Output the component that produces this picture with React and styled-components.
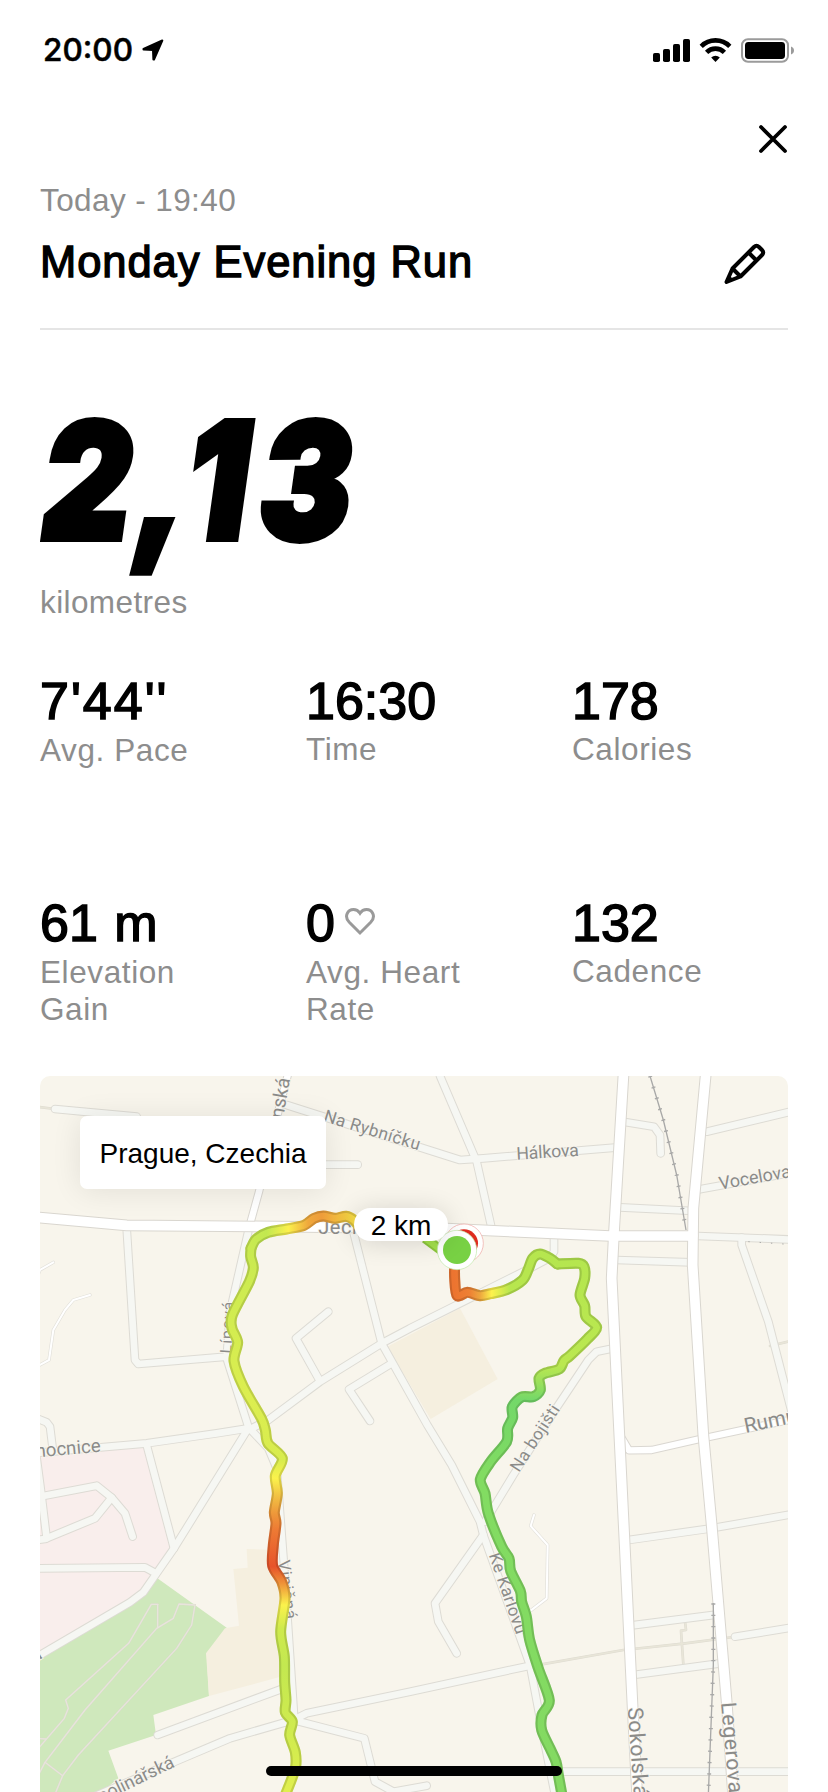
import styled, { createGlobalStyle } from "styled-components";

const stats = [
  { value: "7'44''", label: "Avg. Pace", low: true, spacing: 2 },
  { value: "16:30", label: "Time" },
  { value: "178", label: "Calories" },
  { value: "61 m", label: "Elevation Gain", low: true },
  { value: "0", label: "Avg. Heart Rate", heart: true, low: true },
  { value: "132", label: "Cadence" },
];

const minorRoads = [
  "M75 132 320 155",
  "M770 120 1290 285 1360 280 1755 248",
  "M1230 33 1340 290 1385 490",
  "M700 299H983",
  "M290 490 315 885 325 897 590 875",
  "M658 485 600 740 590 880 655 1085",
  "M970 500 1055 835 1192 1080 1265 1200 1350 1370 1360 1410 1500 1800 1545 2040 1575 2190",
  "M655 1095 715 1065 870 950 1055 835 1140 790 1320 700 1500 610 1562 577 1572 560V515",
  "M895 740 798 820 868 945",
  "M1085 895 957 973 1020 1068",
  "M20 1060 50 1072 60 1085 68 1150",
  "M20 1164 350 1135 560 1105 655 1090",
  "M350 1140 432 1450",
  "M655 1090 432 1450 340 1582 300 1612 20 1776",
  "M660 1092 715 1150 740 1210 762 1500 792 1950",
  "M20 1297 200 1262 245 1298 285 1345 308 1415",
  "M245 1298 195 1360 45 1422 20 1425",
  "M20 1180 32 1270 50 1420",
  "M20 1510 345 1507 378 1525",
  "M383 2010 760 1870",
  "M180 2200 430 2092 600 2020 790 1965 830 1945 1140 1880 1500 1802",
  "M790 1965 1003 2020 1035 2150 1090 2180 1190 2162",
  "M1560 2120H2290",
  "M1360 1410 1215 1615 1225 1670 1280 1765",
  "M1740 852 1700 860 1675 885 1575 1035 1450 1230 1365 1370",
  "M1780 170 1872 185 1890 210 1892 265",
  "M2030 200 2290 138",
  "M2010 373 2290 322",
  "M1770 427 1990 438",
  "M1760 585 1985 592",
  "M2005 513 2290 524",
  "M2135 518V540L2215 770 2290 1060",
  "M1790 1426 2045 1390 2290 1347",
  "M1800 1682 2065 1648",
  "M1810 1830 2070 1795",
  "M2115 1715 2290 1687",
];

const whiteRoads = [
  "M776 20 745 140 687 380 658 485",
  "M1770 1110 1797 1156 1865 1155 2010 1122 2290 1062",
];

const majorRoads = [
  "M20 457 290 481 970 487 1250 491 1740 513 1988 513",
  "M1781 20 1752 500 1745 640 1768 1110 1808 1930 1822 2200",
  "M2028 20 1990 430 1988 600 2020 1110 2045 1380 2090 1910 2110 2200",
];

const trails = [
  "M70 592 30 615 20 640",
  "M180 690 130 705 105 735 70 795 57 885 20 905",
  "M1512 1350 1502 1383 1553 1440 1550 1600 1498 1640",
];

const footpaths = [
  "M20 125 75 132",
  "M1535 1798 1780 1755 1960 1736 2110 1716",
  "M1965 1670 1968 1695 1953 1697 1960 1798",
  "M2220 843 2290 826",
];

const parkPaths = [
  "M383 1618H364L296 1735 107 1905 115 1930 103 1960 20 2056",
  "M383 1618V1688",
  "M495 1620 447 1617 430 1660 380 1690 165 1935 45 2092 20 2140",
  "M495 1620 485 1680 440 1750 145 2070 98 2132 74 2190",
  "M45 2092 98 2132",
  "M20 2020 47 2022",
];

const railways = ["M1860 33 1900 165 1940 330 1968 495", "M2050 1615V1800L2035 2190"];

const streetNames = [
  { text: "Štěpánská", x: 780, y: 42, angle: -80, size: 58, anchor: "end" },
  { text: "Na Rybníčku", x: 878, y: 168, angle: 17, size: 52, length: 300 },
  { text: "Ječná", x: 865, y: 507, angle: 0, size: 60, length: 168 },
  { text: "Lípová", x: 604, y: 866, angle: -87, size: 48, length: 155 },
  { text: "Hálkova", x: 1460, y: 284, angle: -3.5, size: 53, length: 188 },
  { text: "Vocelova", x: 2070, y: 374, angle: -10, size: 54, length: 218 },
  { text: "Rumunská", x: 2147, y: 1104, angle: -12, size: 62 },
  { text: "Na bojišti", x: 1467, y: 1224, angle: -57, size: 51, length: 228 },
  { text: "Ke Karlovu", x: 1376, y: 1470, angle: 71, size: 51, length: 254 },
  { text: "Viničná", x: 745, y: 1487, angle: 83, size: 50, length: 178 },
  { text: "U Nemocnice", x: 213, y: 1160, angle: -5, size: 56, anchor: "end" },
  { text: "Kateřinská", x: 40, y: 1778, angle: -32, size: 54, anchor: "end" },
  { text: "Apolinářská", x: 437, y: 2104, angle: -26, size: 54, length: 284, anchor: "end" },
  { text: "Sokolská", x: 1793, y: 1928, angle: 86, size: 64, length: 270 },
  { text: "Legerova", x: 2073, y: 1913, angle: 85, size: 64, length: 274 },
];

const paceStart = [
  [1274, 595], [1274, 640], [1281, 692], [1312, 682], [1350, 692], [1382, 686],
  [1430, 674], [1478, 645], [1495, 612], [1508, 580], [1530, 567], [1560, 580],
  [1582, 597],
];

const paceOut = [
  [1582, 597], [1645, 595], [1662, 605], [1664, 640], [1650, 690], [1664, 722],
  [1668, 755], [1700, 787], [1672, 822], [1620, 872], [1602, 887], [1588, 912],
  [1545, 925], [1527, 940], [1531, 975], [1510, 995], [1475, 996], [1447, 1025],
  [1448, 1058], [1433, 1090], [1430, 1130], [1382, 1190], [1351, 1243], [1365, 1285],
  [1375, 1345], [1415, 1445], [1437, 1480], [1442, 1518], [1471, 1578], [1475, 1610],
  [1489, 1655], [1499, 1725], [1525, 1810], [1558, 1906], [1536, 1950], [1535, 1995],
  [1560, 2050], [1578, 2090], [1585, 2130], [1596, 2190],
];

const paceTop = [
  [1000, 500], [972, 466], [948, 454], [915, 460], [880, 453], [852, 460],
  [822, 481], [770, 492], [715, 502], [678, 523], [663, 550],
];

const paceBack = [
  [663, 550], [662, 575], [670, 608], [658, 650], [607, 750], [606, 790],
  [623, 832], [612, 888], [640, 965], [694, 1060], [706, 1095], [714, 1135],
  [757, 1180], [736, 1232], [742, 1285], [733, 1342], [738, 1375], [730, 1440],
  [728, 1502], [755, 1550], [765, 1600], [752, 1700], [763, 1775], [764, 1850],
  [768, 1905], [766, 1942], [787, 1970], [779, 2010], [796, 2062], [796, 2110],
  [766, 2190],
];

// Catmull-Rom through the recorded points
const smooth = (points) =>
  points
    .map((point, i) => {
      if (i === 0) return `M${point.join(" ")}`;
      const prev = points[i - 1];
      const before = points[i - 2] || prev;
      const next = points[i + 1] || point;
      const c1 = [0, 1].map((k) => prev[k] + (point[k] - before[k]) / 7);
      const c2 = [0, 1].map((k) => point[k] - (next[k] - prev[k]) / 7);
      return `C${c1.join(" ")} ${c2.join(" ")} ${point.join(" ")}`;
    })
    .join("");

const PaceGradient = ({ id, axis, from, to, stops }) => (
  <linearGradient
    id={id}
    gradientUnits="userSpaceOnUse"
    {...{ [`${axis}1`]: from, [`${axis}2`]: to }}
    {...(axis === "y" ? { x1: 0, x2: 0 } : { y1: 0, y2: 0 })}
  >
    {stops.map(([at, color]) => (
      <stop key={at} offset={(at - from) / (to - from)} stopColor={color} />
    ))}
  </linearGradient>
);

const Track = ({ legs }) => (
  <g fill="none" strokeLinecap="round" strokeLinejoin="round">
    {legs.map(({ points, pace }) => (
      <path key={pace} d={smooth(points)} stroke={`url(#${pace})`} strokeWidth="33" />
    ))}
    <g opacity="0.13">
      {legs.map(({ points, pace }) => (
        <path key={pace} d={smooth(points)} stroke="#000" strokeWidth="33" />
      ))}
    </g>
    {legs.map(({ points, pace }) => (
      <path key={pace} d={smooth(points)} stroke={`url(#${pace})`} strokeWidth="20" />
    ))}
  </g>
);

const Roads = ({ roads, casing, fill, width, edge = 6 }) => (
  <g fill="none" strokeLinecap="round" strokeLinejoin="round">
    {roads.map((d) => (
      <path key={d} d={d} stroke={casing} strokeWidth={width + edge} />
    ))}
    {roads.map((d) => (
      <path key={d} d={d} stroke={fill} strokeWidth={width} />
    ))}
  </g>
);

const RouteMap = () => (
  <MapCanvas viewBox="30 33 2244 2148">
    <defs>
      <PaceGradient
        id="pace-start"
        axis="x"
        from={1272}
        to={1582}
        stops={[
          [1272, "#ec7430"],
          [1318, "#ee8034"],
          [1350, "#eda63e"],
          [1385, "#fdf24c"],
          [1440, "#b8e64e"],
          [1582, "#b5e64f"],
        ]}
      />
      <PaceGradient
        id="pace-out"
        axis="y"
        from={590}
        to={2190}
        stops={[
          [590, "#b5e64f"],
          [900, "#bbe850"],
          [960, "#95df5c"],
          [1005, "#74d869"],
          [1120, "#79d965"],
          [1220, "#82dc62"],
          [2190, "#84da62"],
        ]}
      />
      <PaceGradient
        id="pace-top"
        axis="x"
        from={660}
        to={1000}
        stops={[
          [660, "#c9ea50"],
          [710, "#c2e850"],
          [775, "#fbf04c"],
          [835, "#efa83c"],
          [875, "#ee9c3a"],
          [945, "#f2c840"],
          [1000, "#fbf04c"],
        ]}
      />
      <PaceGradient
        id="pace-back"
        axis="y"
        from={550}
        to={2190}
        stops={[
          [550, "#c9ea50"],
          [1000, "#dcee50"],
          [1185, "#d8ec4e"],
          [1240, "#fbf24c"],
          [1290, "#f2c444"],
          [1345, "#ee983a"],
          [1395, "#ed7a34"],
          [1505, "#e7532a"],
          [1555, "#ef9238"],
          [1620, "#fbf24c"],
          [1690, "#cfea4e"],
          [1800, "#c3e850"],
          [2060, "#d4ec4e"],
          [2190, "#e2ef4e"],
        ]}
      />
    </defs>

    <rect x="30" y="33" width="2244" height="2148" fill="#f8f5ec" />
    <path d="M30 1165 345 1145 428 1450 375 1525 340 1585 30 1770Z" fill="#f9eeec" />
    <path
      d="M380 1538 590 1688 530 1765 537 1893 370 1950 378 2010 235 2057 265 2140 215 2181H30V1770L300 1620 340 1590Z"
      fill="#cfe8bc"
    />
    <path
      d="M650 1452 735 1455 770 1580 757 1834 537 1893 528 1765 585 1690 627 1682 610 1512 653 1508Z"
      fill="#f5efdf"
    />
    <path d="M1072 845 1290 730 1403 942 1202 1062Z" fill="#f5efdf" />

    <Roads roads={parkPaths} casing="#d6dcc6" fill="#e8e4dc" width={4} edge={2} />
    <Roads roads={footpaths} casing="#dedbd0" fill="#e8e5d8" width={5} edge={3} />
    <Roads roads={trails} casing="#e2e0da" fill="#ffffff" width={6} edge={4} />
    <Roads roads={minorRoads} casing="#dddbd4" fill="#f6f7f3" width={20} />
    <Roads roads={whiteRoads} casing="#dad7d1" fill="#ffffff" width={19} />
    <Roads roads={majorRoads} casing="#d9d6cf" fill="#ffffff" width={29} />

    <g fill="none" stroke="#a9a9a8">
      {railways.map((d) => (
        <g key={d}>
          <path d={d} strokeWidth="4" />
          <path d={d} strokeWidth="12" strokeDasharray="4 30" />
        </g>
      ))}
      <path d="M2155 530 2290 539" strokeWidth="3" strokeDasharray="4 30" />
    </g>

    {streetNames.map(({ text, x, y, angle, size, length, anchor }) => (
      <StreetName
        key={text}
        fontSize={size}
        textLength={length}
        textAnchor={anchor}
        transform={`translate(${x} ${y}) rotate(${angle})`}
      >
        {text}
      </StreetName>
    ))}

    <path d="M1185 520 1260 575" stroke="#8cc63c" strokeWidth="30" />
    <path d="M1185 520 1260 575" stroke="#a3e04c" strokeWidth="18" />
    <Track
      legs={[
        { points: paceTop, pace: "pace-top" },
        { points: paceBack, pace: "pace-back" },
      ]}
    />
    <Track
      legs={[
        { points: paceStart, pace: "pace-start" },
        { points: paceOut, pace: "pace-out" },
      ]}
    />

    <circle cx="1302" cy="535" r="58" fill="#fff" stroke="#eea4a0" strokeWidth="2" />
    <circle cx="1302" cy="535" r="42" fill="#df2b1f" />
    <circle cx="1281" cy="555" r="59" fill="#fff" stroke="#bfe9a8" strokeWidth="2" />
    <circle cx="1281" cy="555" r="42" fill="#78d144" />
  </MapCanvas>
);

const StatusIcons = () => (
  <svg width="144" height="28" viewBox="0 0 144 28">
    <rect x="0" y="17" width="7" height="9" rx="1.8" />
    <rect x="10" y="13" width="7" height="13" rx="1.8" />
    <rect x="20" y="8" width="7" height="18" rx="1.8" />
    <rect x="30" y="3" width="7" height="23" rx="1.8" />
    <g fill="none" stroke="#000" strokeWidth="4.6">
      <path d="M48.2 10.3a20.3 20.3 0 0 1 28.6 0" />
      <path d="M53.6 16.3a12.6 12.6 0 0 1 17.8 0" />
    </g>
    <path d="M62.5 26 58.2 21.6a6.2 6.2 0 0 1 8.6 0Z" />
    <rect x="89" y="3.2" width="46" height="22.6" rx="6" fill="none" stroke="#9b9b9b" strokeWidth="2" />
    <rect x="92" y="6" width="40" height="17" rx="3.4" />
    <path d="M138 10.5q3 1.2 3 4t-3 4Z" fill="#9b9b9b" />
  </svg>
);

const App = () => {
  return (
    <>
      <GlobalStyle />
      <Screen>
        <StatusBar>
          <Clock>
            20:00
            <svg width="22" height="22" viewBox="0 0 22 22" stroke="#000" strokeWidth="2" strokeLinejoin="round">
              <path d="M20.3 1.5 12 20.5H11.4L11 11 1.5 10.6V9.9Z" />
            </svg>
          </Clock>
          <StatusIcons />
        </StatusBar>

        <CloseRow>
          <svg
            width="30"
            height="30"
            viewBox="0 0 30 30"
            stroke="#000"
            strokeWidth="3.8"
            strokeLinecap="round"
          >
            <path d="M3 3 27 27M27 3 3 27" />
          </svg>
        </CloseRow>

        <Header>
          <RunDate>Today - 19:40</RunDate>
          <TitleRow>
            <Title>Monday Evening Run</Title>
            <svg
              width="42"
              height="42"
              viewBox="0 0 42 42"
              fill="none"
              stroke="#000"
              strokeWidth="4"
              strokeLinejoin="round"
            >
              <path d="M2.5 39 8.5 25.5 30 4Q32.5 1.5 35 4L38 7Q40.5 9.5 38 12L16.5 33.5ZM8.5 25.5 16.5 33.5M24.5 9.5 32.5 17.5M4 34 8 38" />
            </svg>
          </TitleRow>
        </Header>

        <Distance>
          <DistanceValue>
            2<Comma>,</Comma>
            <Tenths>1</Tenths>3
          </DistanceValue>
          <DistanceUnit>kilometres</DistanceUnit>
        </Distance>

        <StatsGrid>
          {stats.map(({ value, label, heart, low, spacing }) => (
            <Stat key={label}>
              <StatValue $spacing={spacing}>
                {value}
                {heart && (
                  <svg
                    width="30"
                    height="28"
                    viewBox="0 0 30 28"
                    fill="none"
                    stroke="#9a9a9a"
                    strokeWidth="3"
                  >
                    <path d="M15 25 4.3 14.3C-1.5 8.2 3 1.5 8.5 1.5 11.5 1.5 13.5 3 15 5.3 16.5 3 18.5 1.5 21.5 1.5 27 1.5 31.5 8.2 25.7 14.3Z" />
                  </svg>
                )}
              </StatValue>
              <StatLabel $low={low}>{label}</StatLabel>
            </Stat>
          ))}
        </StatsGrid>

        <MapCard>
          <RouteMap />
          <PlaceBadge>Prague, Czechia</PlaceBadge>
          <KmMarker>2 km</KmMarker>
        </MapCard>
        <HomeIndicator />
      </Screen>
    </>
  );
};

const GlobalStyle = createGlobalStyle`
  * {
    box-sizing: border-box;
    margin: 0;
  }

  body {
    background: #fff;
  }

  svg {
    display: block;
    flex: none;
  }
`;

const Screen = styled.main`
  position: relative;
  display: flex;
  flex-direction: column;
  width: 828px;
  height: 1792px;
  padding: 0 40px;
  overflow: hidden;
  background: #fff;
  color: #000;
  font-family: "Liberation Sans", Arial, sans-serif;
`;

const StatusBar = styled.div`
  display: flex;
  align-items: center;
  justify-content: space-between;
  height: 99px;
  margin-right: -9px;
  padding-left: 3px;
`;

const Clock = styled.div`
  display: flex;
  align-items: center;
  gap: 9px;
  font: 500 31.5px/40px Inter, sans-serif;
  -webkit-text-stroke: 0.5px #000;
`;

const CloseRow = styled.div`
  display: flex;
  justify-content: flex-end;
  height: 77px;
  padding-top: 25px;
`;

const Header = styled.header`
  height: 154px;
  border-bottom: 2px solid #e5e5e5;
`;

const RunDate = styled.p`
  padding-top: 5px;
  color: #8d8d8d;
  font-size: 31.5px;
  letter-spacing: 0.4px;
  line-height: 38px;
`;

const TitleRow = styled.div`
  display: flex;
  align-items: flex-end;
  justify-content: space-between;
  height: 66px;
  padding-right: 22px;
`;

const Title = styled.h1`
  align-self: flex-start;
  padding-top: 15px;
  font-size: 43.5px;
  font-weight: 400;
  letter-spacing: 0.95px;
  line-height: 56px;
  -webkit-text-stroke: 1.4px #000;
`;

const Distance = styled.section`
  height: 328px;
  padding-top: 60px;
`;

const DistanceValue = styled.p`
  width: max-content;
  height: 191px;
  padding-left: 3px;
  font: italic 900 162px/180px Inter, sans-serif;
  transform: scaleX(0.85);
  transform-origin: 0 0;
  -webkit-text-stroke: 6px #000;
`;

const Comma = styled.span`
  margin: 0 -1px 0 5px;
`;

const Tenths = styled.span`
  margin-right: 13px;
`;

const DistanceUnit = styled.p`
  padding-top: 2px;
  color: #8d8d8d;
  font-size: 31.5px;
  letter-spacing: 0.4px;
  line-height: 38px;
`;

const StatsGrid = styled.section`
  display: grid;
  grid-template-columns: repeat(3, 266px);
  grid-template-rows: 222px 196px;
  height: 418px;
`;

const Stat = styled.div`
  padding-top: 13px;
`;

const StatValue = styled.p`
  display: flex;
  align-items: center;
  gap: 10px;
  font-size: 52px;
  letter-spacing: ${({ $spacing = 0 }) => $spacing}px;
  line-height: 60px;
  white-space: pre;
  word-spacing: 2px;
  -webkit-text-stroke: 1.5px #000;

  svg {
    margin-bottom: 3px;
  }
`;

const StatLabel = styled.p`
  max-width: 190px;
  padding-top: ${({ $low }) => ($low ? 1 : 0)}px;
  color: #8d8d8d;
  font-size: 31.5px;
  letter-spacing: 0.6px;
  line-height: 37px;
`;

const MapCard = styled.section`
  position: relative;
  height: 716px;
  overflow: hidden;
  border-radius: 10px 10px 0 0;
`;

const MapCanvas = styled.svg`
  width: 748px;
  height: 716px;
`;

const StreetName = styled.text`
  fill: #8b8b89;
  stroke: #f8f6ef;
  stroke-width: 5px;
  paint-order: stroke;
  font-family: Roboto, Inter, sans-serif;
`;

const PlaceBadge = styled.div`
  position: absolute;
  top: 40px;
  left: 40px;
  width: 246px;
  height: 73px;
  border-radius: 7px;
  background: #fff;
  box-shadow: 0 2px 30px rgba(0, 0, 0, 0.09);
  font-size: 28px;
  line-height: 75px;
  text-align: center;
`;

const KmMarker = styled.div`
  position: absolute;
  top: 132px;
  left: 314px;
  width: 94px;
  height: 33px;
  border-radius: 17px;
  background: #fff;
  box-shadow: 0 2px 26px rgba(0, 0, 0, 0.14);
  font-size: 28px;
  line-height: 35px;
  text-align: center;
`;

const HomeIndicator = styled.div`
  position: absolute;
  bottom: 16px;
  left: 266px;
  width: 296px;
  height: 10px;
  border-radius: 5px;
  background: #000;
`;

export default App;
